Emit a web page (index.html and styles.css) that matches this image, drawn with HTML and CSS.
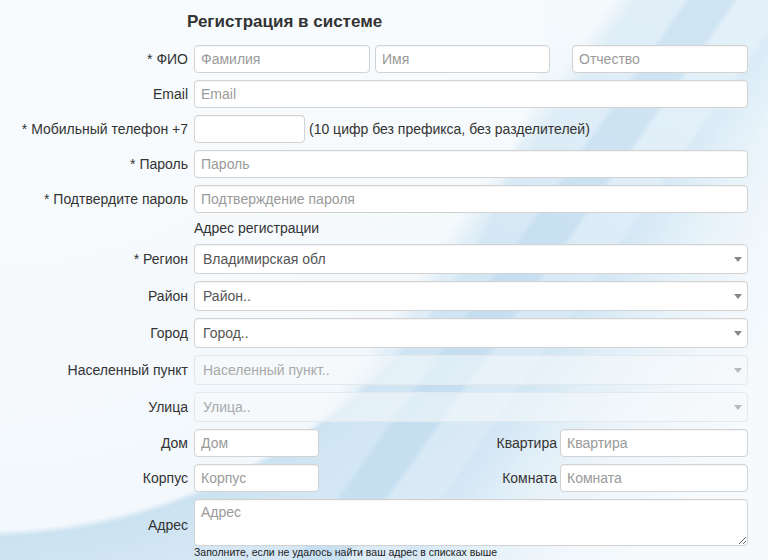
FILE: index.html
```html
<!DOCTYPE html>
<html lang="ru">
<head>
<meta charset="utf-8">
<title>Регистрация в системе</title>
<link rel="stylesheet" href="styles.css">
</head>
<body>
<form class="form">
  <h4 class="title">Регистрация в системе</h4>

  <div class="row">
    <label class="label">* ФИО</label>
    <div class="fio">
      <input class="input fio-last" placeholder="Фамилия">
      <input class="input fio-first" placeholder="Имя">
      <input class="input fio-middle" placeholder="Отчество">
    </div>
  </div>

  <div class="row">
    <label class="label">Email</label>
    <input class="input" placeholder="Email">
  </div>

  <div class="row">
    <label class="label">* Мобильный телефон +7</label>
    <div class="phone">
      <input class="input phone-input">
      <span class="hint">(10 цифр без префикса, без разделителей)</span>
    </div>
  </div>

  <div class="row">
    <label class="label">* Пароль</label>
    <input class="input" type="password" placeholder="Пароль">
  </div>

  <div class="row">
    <label class="label">* Подтвердите пароль</label>
    <input class="input" type="password" placeholder="Подтверждение пароля">
  </div>

  <div class="section">Адрес регистрации</div>

  <div class="row row-select">
    <label class="label">* Регион</label>
    <div class="select-wrap">
      <select class="select"><option>Владимирская обл</option></select>
    </div>
  </div>

  <div class="row row-select">
    <label class="label">Район</label>
    <div class="select-wrap">
      <select class="select"><option>Район..</option></select>
    </div>
  </div>

  <div class="row row-select">
    <label class="label">Город</label>
    <div class="select-wrap">
      <select class="select"><option>Город..</option></select>
    </div>
  </div>

  <div class="row row-select">
    <label class="label">Населенный пункт</label>
    <div class="select-wrap disabled">
      <select class="select" disabled><option>Населенный пункт..</option></select>
    </div>
  </div>

  <div class="row row-select">
    <label class="label">Улица</label>
    <div class="select-wrap disabled">
      <select class="select" disabled><option>Улица..</option></select>
    </div>
  </div>

  <div class="row">
    <label class="label">Дом</label>
    <div class="pair">
      <input class="input short" placeholder="Дом">
      <label class="label pair-label">Квартира</label>
      <input class="input pair-input" placeholder="Квартира">
    </div>
  </div>

  <div class="row">
    <label class="label">Корпус</label>
    <div class="pair">
      <input class="input short" placeholder="Корпус">
      <label class="label pair-label">Комната</label>
      <input class="input pair-input" placeholder="Комната">
    </div>
  </div>

  <div class="row row-address">
    <label class="label address-label">Адрес</label>
    <div class="address">
      <textarea class="textarea" placeholder="Адрес"></textarea>
      <div class="help">Заполните, если не удалось найти ваш адрес в списках выше</div>
    </div>
  </div>
</form>
</body>
</html>
```

FILE: styles.css
```css
html {
  min-height: 100%;
  background-color: #f7fbfd;
  background-image:
    linear-gradient(125deg,
      rgba(255,255,255,0) 500px,
      rgba(210,230,244,0.6) 522px,
      rgba(210,230,244,0.6) 560px,
      rgba(190,219,239,0.7) 566px,
      rgba(190,219,239,0.7) 600px,
      rgba(214,233,246,0.6) 606px,
      rgba(214,233,246,0.6) 645px,
      rgba(200,225,242,0.6) 650px,
      rgba(220,237,248,0.5) 700px,
      rgba(255,255,255,0) 770px),
    linear-gradient(to bottom,
      rgba(247,251,253,0.95) 0,
      rgba(247,251,253,0.8) 120px,
      rgba(247,251,253,0) 300px),
    radial-gradient(circle at -14px -26px,
      #f9fcfe 0,
      #f3f8fc 556px,
      #cbe2f1 563px,
      #d9e9f5 640px,
      #ecf4fa 760px,
      #f6fafd 880px);
  background-repeat: no-repeat;
  background-size: 768px 560px;
}

body {
  margin: 0;
  font-family: "Liberation Sans", Arial, sans-serif;
  font-size: 14px;
  color: #333;
}

.form {
  width: 748px;
  padding-top: 12px;
}

.title {
  margin: 0 0 13px 187px;
  font-size: 17px;
  line-height: 20px;
  font-weight: bold;
  color: #333;
}

.row {
  display: grid;
  grid-template-columns: 188px 1fr;
  column-gap: 6px;
  align-items: center;
  margin-bottom: 7px;
}

.label {
  text-align: right;
  color: #333;
  line-height: 20px;
  white-space: nowrap;
}

.input,
.select,
.textarea {
  box-sizing: border-box;
  width: 100%;
  height: 28px;
  margin: 0;
  padding: 0 6px;
  font-family: "Liberation Sans", Arial, sans-serif;
  font-size: 14px;
  color: #555;
  background: #fff;
  border: 1px solid #d2d2d2;
  border-radius: 4px;
  outline: none;
  box-shadow: inset 0 1px 1px rgba(0,0,0,0.04);
}

.input::placeholder,
.textarea::placeholder {
  color: #9a9a9a;
}

.fio {
  display: flex;
  gap: 5px;
}

.fio-last { flex: 0 0 176px; width: 176px; }
.fio-first { flex: 0 0 175px; width: 175px; }
.fio-middle { flex: 0 0 176px; width: 176px; margin-left: auto; }

.phone {
  display: flex;
  align-items: center;
  gap: 4px;
}

.phone-input {
  flex: 0 0 111px;
  width: 111px;
}

.hint {
  color: #333;
  white-space: nowrap;
}

.section {
  margin: 0 0 7px 194px;
  line-height: 17px;
  color: #333;
}

.select-wrap {
  position: relative;
}

.select {
  height: 30px;
  padding: 0 8px;
  -webkit-appearance: none;
  appearance: none;
  color: #555;
}

.select-wrap::after {
  content: "";
  position: absolute;
  right: 6px;
  top: 13px;
  border-left: 4px solid transparent;
  border-right: 4px solid transparent;
  border-top: 5px solid #888;
}

.select-wrap.disabled .select {
  background: rgba(246, 249, 251, 0.55);
  border-color: #e3e8ec;
  color: #a9a9a9;
  box-shadow: none;
  opacity: 1;
}

.select-wrap.disabled::after {
  border-top-color: #b9b9b9;
}

.pair {
  display: flex;
  align-items: center;
  gap: 3px;
}

.short {
  flex: 0 0 125px;
  width: 125px;
}

.pair-label {
  margin-left: auto;
}

.pair-input {
  flex: 0 0 188px;
  width: 188px;
}

.row-address {
  align-items: start;
}

.address-label {
  padding-top: 16px;
}

.textarea {
  display: block;
  height: 47px;
  padding: 4px 6px;
  resize: vertical;
}

.help {
  font-size: 10.5px;
  line-height: 13px;
  color: #222;
  white-space: nowrap;
}
```
